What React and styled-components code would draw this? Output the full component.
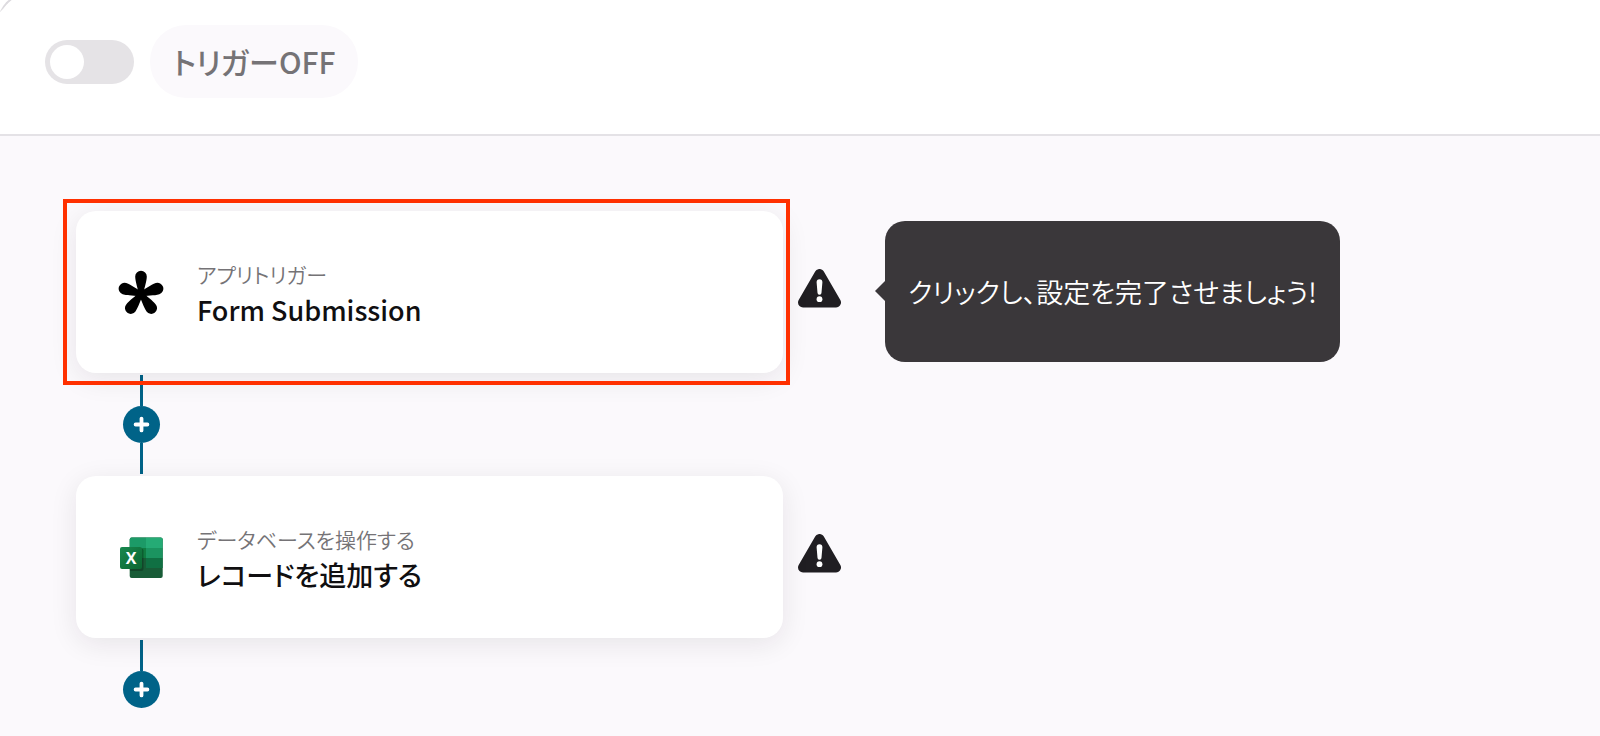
import React, { useState } from "react";
import styled, { createGlobalStyle } from "styled-components";

const GlobalStyle = createGlobalStyle`
  * {
    box-sizing: border-box;
  }

  body {
    margin: 0;
    background-color: #fbf9fc;
    color: #100f11;
    font-family: "Noto Sans CJK JP", "Noto Sans", sans-serif;
    font-feature-settings: "palt";
  }

  button {
    font: inherit;
    font-feature-settings: inherit;
    color: inherit;
    cursor: pointer;
  }
`;

const Header = styled.header`
  position: relative;
  display: flex;
  align-items: center;
  gap: 16px;
  padding: 25px 45px 36px;
  background-color: #fff;
  border-bottom: 2px solid #e4e2e6;
  overflow: hidden;

  &::before {
    content: "";
    position: absolute;
    top: -6px;
    left: -2px;
    width: 60px;
    height: 60px;
    border: 2px solid #dddbdf;
    border-width: 2px 0 0 2px;
    border-radius: 28px 0 0 0;
    clip-path: polygon(0 0, 20px 0, 0 20px);
  }
`;

const Switch = styled.input`
  appearance: none;
  display: flex;
  align-items: center;
  width: 89px;
  height: 44px;
  margin: 0;
  padding: 5px;
  border-radius: 22px;
  background-color: ${({ checked }) => (checked ? "#006388" : "#e5e3e6")};
  cursor: pointer;

  &::before {
    content: "";
    width: 34px;
    height: 34px;
    margin-left: ${({ checked }) => (checked ? "auto" : "0")};
    border-radius: 50%;
    background-color: #fff;
  }
`;

const SwitchLabel = styled.label`
  padding: 0 23px;
  border-radius: 36px;
  background-color: #fbf9fc;
  color: #757376;
  font-size: 30px;
  font-weight: 500;
  line-height: 73px;
`;

const Flow = styled.main`
  display: flex;
  flex-direction: column;
  padding: 75px 76px 27px;
`;

const Step = styled.div`
  display: flex;
  align-items: center;
`;

const CardArea = styled.div`
  position: relative;
  flex: 0 1 707px;
`;

const Card = styled.button`
  display: flex;
  align-items: center;
  gap: 33px;
  width: 100%;
  padding: 46px 42px;
  border: none;
  border-radius: 20px;
  background-color: #fff;
  text-align: left;
  box-shadow: 0 6px 28px rgba(30, 25, 35, 0.09);
`;

const Highlight = styled.span`
  position: absolute;
  z-index: 1;
  inset: -12px -7px -12px -13px;
  border: 4px solid #ff3000;
  pointer-events: none;
`;

const CardText = styled.span`
  display: flex;
  flex-direction: column;
  line-height: 35px;
`;

const Caption = styled.span`
  color: #757376;
  font-size: 21px;
  font-weight: 350;
`;

const Title = styled.span`
  font-size: 27px;
  font-weight: 500;
`;

const Warning = styled.svg`
  flex: none;
  width: 43px;
  height: 39px;
  margin: 0 0 8px 15px;
`;

const Tooltip = styled.div`
  position: relative;
  margin: 0 0 2px 44px;
  padding: 52px 23px;
  border-radius: 20px;
  background-color: #3a373a;
  color: #fff;
  font-size: 27px;
  font-weight: 350;
  line-height: 37px;

  &::before {
    content: "";
    position: absolute;
    top: 50%;
    left: -10px;
    margin-top: -10px;
    border: 10px solid transparent;
    border-left: none;
    border-right-color: #3a373a;
  }
`;

const Connector = styled.div`
  display: flex;
  flex-direction: column;
  align-items: center;
  width: 37px;
  margin-left: 47px;
  padding: 2px 0;
`;

const Line = styled.span`
  width: 3px;
  height: 31px;
  background-color: #006388;
`;

const AddButton = styled.button`
  display: flex;
  align-items: center;
  justify-content: center;
  width: 37px;
  height: 37px;
  padding: 0;
  border: none;
  border-radius: 50%;
  background-color: #006388;
`;

const Icon = styled.svg`
  flex: none;
  width: 46px;
  height: 46px;
`;

const FormIcon = () => (
  <Icon viewBox="0 0 46 46" aria-hidden="true">
    <g transform="translate(23 25)">
      {[0, 72, 144, 216, 288].map((angle) => (
        <path
          key={angle}
          transform={`rotate(${angle})`}
          d="M-2.4 1C-2.8-5-5.8-12-5.8-17.4A5.8 5.8 0 0 1 5.8-17.4C5.8-12 2.8-5 2.4 1Z"
        />
      ))}
    </g>
  </Icon>
);

const ExcelIcon = () => (
  <Icon viewBox="0 0 46 46" aria-hidden="true">
    <defs>
      <clipPath id="sheet">
        <rect x="11.7" y="3.6" width="33" height="40.4" rx="2" />
      </clipPath>
      <linearGradient id="badge" x1="0" y1="0" x2="1" y2="1">
        <stop offset="0" stopColor="#18884f" />
        <stop offset="1" stopColor="#0b6631" />
      </linearGradient>
    </defs>
    <g clipPath="url(#sheet)">
      <rect x="11" y="3" width="34" height="42" fill="#185c37" />
      <rect x="11" y="3" width="17" height="11" fill="#1c9a67" />
      <rect x="28" y="3" width="17" height="11" fill="#25ab75" />
      <rect x="11" y="14" width="17" height="10" fill="#107c41" />
      <rect x="28" y="14" width="17" height="10" fill="#1b9460" />
      <rect x="28" y="24" width="17" height="10" fill="#107043" />
      <rect x="11" y="14.5" width="14.5" height="22.5" rx="2" opacity="0.25" />
    </g>
    <rect x="2" y="13" width="22" height="22" rx="2" fill="url(#badge)" />
    <text
      x="13"
      y="29.8"
      fill="#fff"
      fontFamily="Open Sans, sans-serif"
      fontSize="16"
      fontWeight="700"
      textAnchor="middle"
    >
      X
    </text>
  </Icon>
);

const WarningIcon = () => (
  <Warning viewBox="0 0 43 39" role="img" aria-label="未設定">
    <path
      d="M21.5 5L38 33.5H5Z"
      fill="#201e22"
      stroke="#201e22"
      strokeWidth="10"
      strokeLinejoin="round"
    />
    <path d="M18.6 13.2a2.9 2.9 0 0 1 5.8 0l-.9 10.6a2 2 0 0 1-4 0Z" fill="#fff" />
    <circle cx="21.5" cy="30.2" r="2.9" fill="#fff" />
  </Warning>
);

const Add = () => (
  <AddButton type="button" aria-label="追加">
    <svg width="17" height="17" viewBox="0 0 17 17" aria-hidden="true">
      <path
        d="M8.5 2.6v11.8M2.6 8.5h11.8"
        stroke="#fff"
        strokeWidth="3.8"
        strokeLinecap="round"
      />
    </svg>
  </AddButton>
);

const steps = [
  {
    id: 1,
    icon: <FormIcon />,
    caption: "アプリトリガー",
    title: "Form Submission",
    selected: true,
    hint: "クリックし、設定を完了させましょう!",
  },
  {
    id: 2,
    icon: <ExcelIcon />,
    caption: "データベースを操作する",
    title: "レコードを追加する",
  },
];

const App = () => {
  const [enabled, setEnabled] = useState(false);

  return (
    <>
      <GlobalStyle />
      <Header>
        <Switch
          id="trigger"
          type="checkbox"
          role="switch"
          checked={enabled}
          onChange={(e) => setEnabled(e.target.checked)}
        />
        <SwitchLabel htmlFor="trigger">
          トリガー{enabled ? "ON" : "OFF"}
        </SwitchLabel>
      </Header>
      <Flow>
        {steps.map((step, i) => (
          <React.Fragment key={step.id}>
            <Step>
              <CardArea>
                <Card type="button">
                  {step.icon}
                  <CardText>
                    <Caption>{step.caption}</Caption>
                    <Title>{step.title}</Title>
                  </CardText>
                </Card>
                {step.selected && <Highlight />}
              </CardArea>
              <WarningIcon />
              {step.hint && <Tooltip role="tooltip">{step.hint}</Tooltip>}
            </Step>
            <Connector>
              <Line />
              <Add />
              {i < steps.length - 1 && <Line />}
            </Connector>
          </React.Fragment>
        ))}
      </Flow>
    </>
  );
};

export default App;
